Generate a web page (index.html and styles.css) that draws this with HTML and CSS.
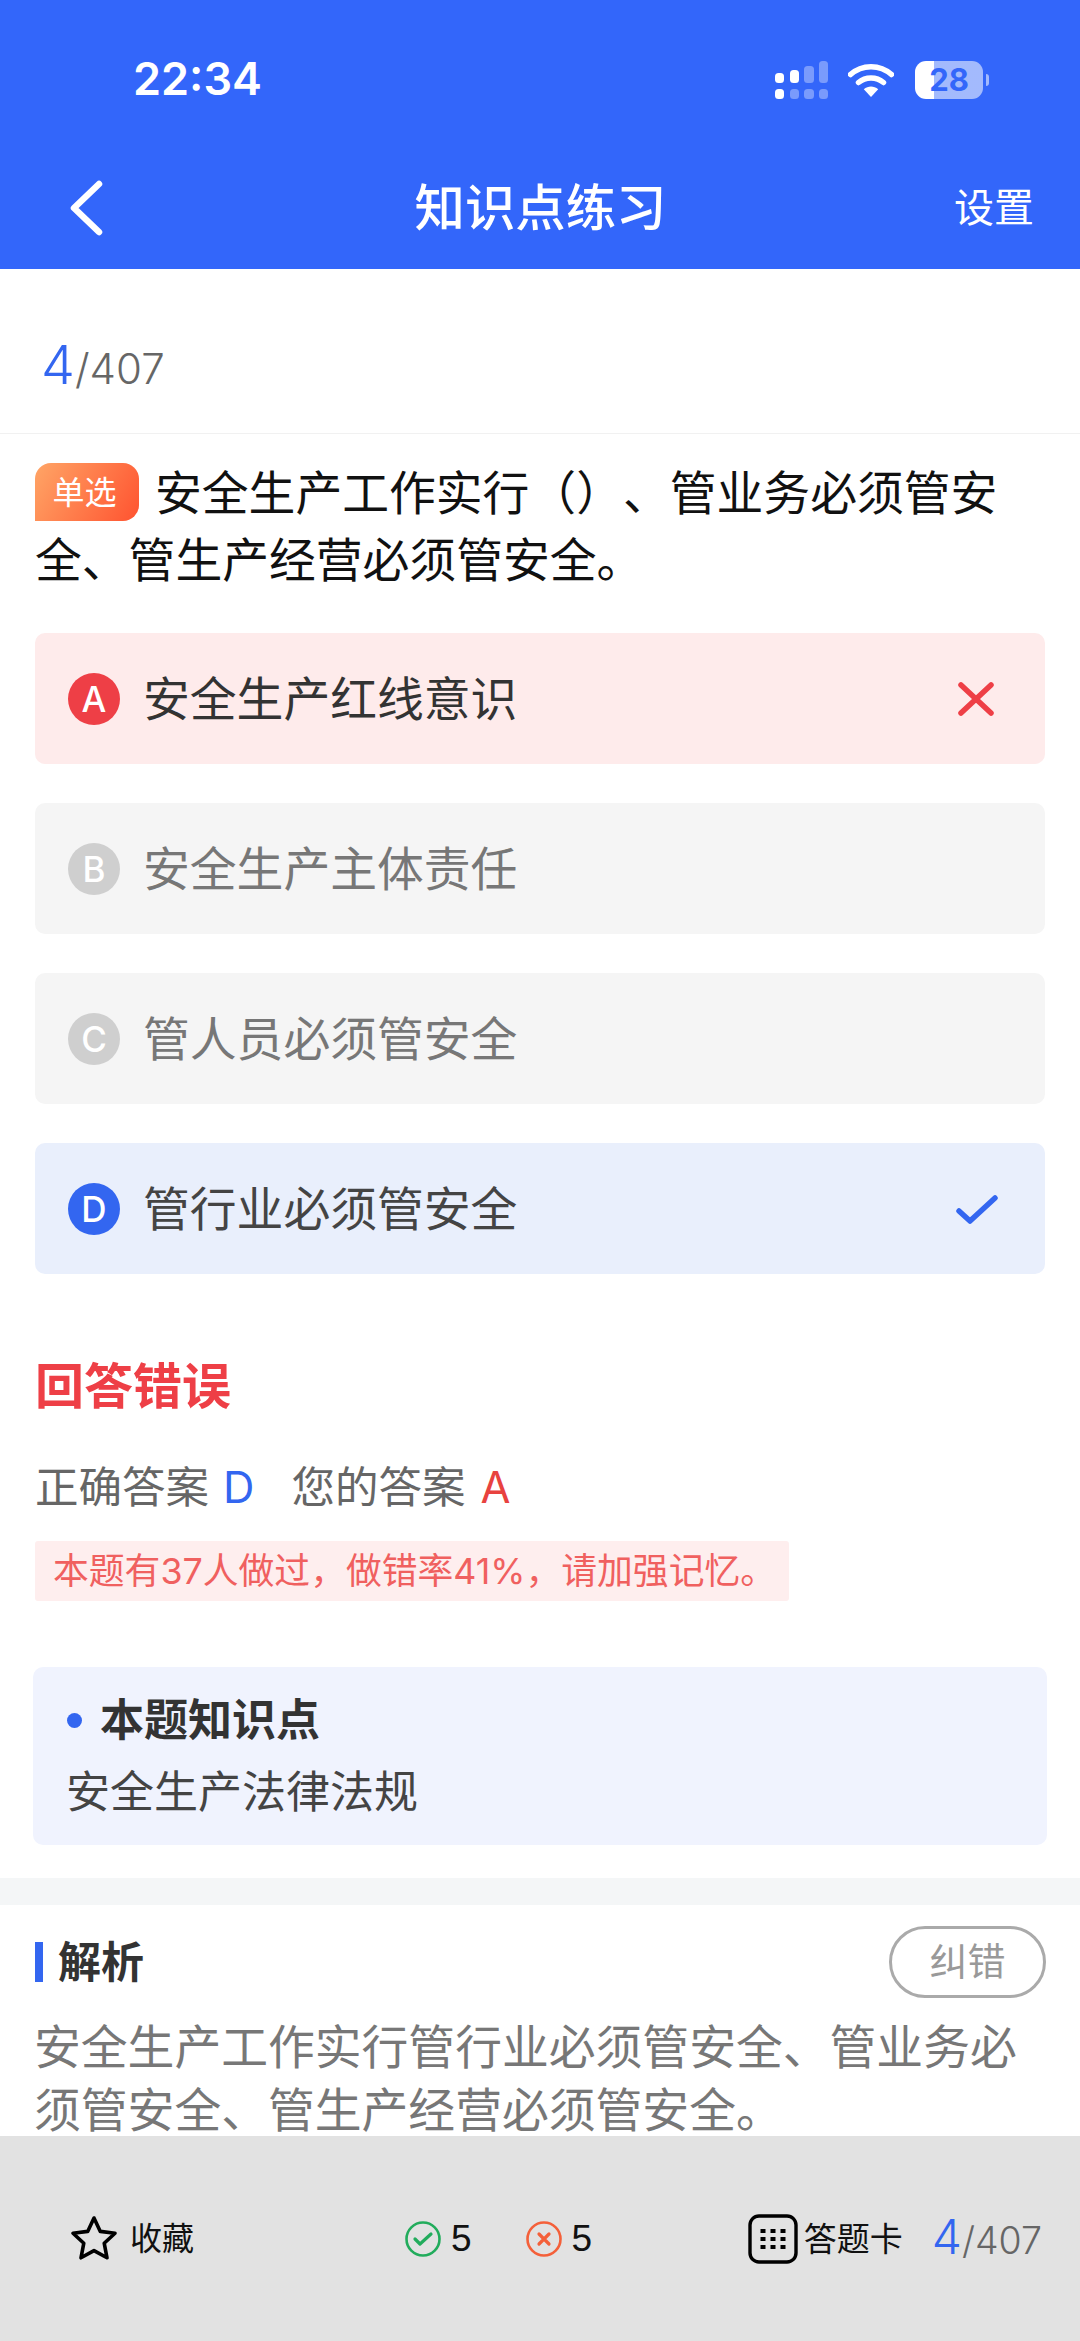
FILE: index.html
```html
<!DOCTYPE html>
<html lang="zh-CN">
<head>
<meta charset="utf-8">
<title>知识点练习</title>
<link rel="stylesheet" href="styles.css">
</head>
<body>
<div class="page">
  <header class="header">
    <div class="status">
      <span class="time">22:34</span>
      <div class="status-icons">
        <svg class="signal" width="53" height="38" viewBox="0 0 53 38">
          <rect x="0" y="12" width="9" height="10" rx="3.5" fill="#fff"/>
          <rect x="15" y="9" width="9" height="13" rx="3.5" fill="#fff"/>
          <rect x="29" y="5" width="10" height="17" rx="3.5" fill="#fff" opacity=".35"/>
          <rect x="44" y="0" width="9" height="22" rx="3.5" fill="#fff" opacity=".35"/>
          <rect x="0" y="28" width="9" height="10" rx="3.5" fill="#fff"/>
          <rect x="15" y="28" width="9" height="10" rx="3.5" fill="#fff" opacity=".35"/>
          <rect x="29" y="28" width="10" height="10" rx="3.5" fill="#fff" opacity=".35"/>
          <rect x="44" y="28" width="9" height="10" rx="3.5" fill="#fff" opacity=".35"/>
        </svg>
        <svg class="wifi" width="46" height="34" viewBox="0 0 46 34">
          <path d="M2.5 11.5C14 1 32 1 43.5 11.5" fill="none" stroke="#fff" stroke-width="5.5" stroke-linecap="round"/>
          <path d="M10.5 19.5C17.5 13.5 28.5 13.5 35.5 19.5" fill="none" stroke="#fff" stroke-width="5.5" stroke-linecap="round"/>
          <path d="M15.8 26.2C20 22.6 26 22.6 30.2 26.2L23 34Z" fill="#fff"/>
        </svg>
        <div class="battery"><span>28</span></div>
        <span class="battery-tip"></span>
      </div>
    </div>
    <nav class="nav">
      <svg class="back" width="36" height="56" viewBox="0 0 36 56">
        <path d="M31 4L6 28L31 52" fill="none" stroke="#fff" stroke-width="6.5" stroke-linecap="round" stroke-linejoin="round"/>
      </svg>
      <h1 class="nav-title">知识点练习</h1>
      <span class="nav-action">设置</span>
    </nav>
  </header>

  <main class="content">
    <div class="progress"><b class="progress-now">4</b><span class="progress-total">/407</span></div>

    <p class="question"><span class="badge">单选</span>安全生产工作实行（）、管业务必须管安全、管生产经营必须管安全。</p>

    <ul class="options">
      <li class="option option-wrong">
        <span class="letter">A</span><span class="option-text">安全生产红线意识</span>
        <svg class="mark" width="36" height="36" viewBox="0 0 36 36"><path d="M3 4L33 32M33 4L3 32" fill="none" stroke="#ee3f46" stroke-width="5.5" stroke-linecap="round"/></svg>
      </li>
      <li class="option option-idle">
        <span class="letter">B</span><span class="option-text">安全生产主体责任</span>
      </li>
      <li class="option option-idle">
        <span class="letter">C</span><span class="option-text">管人员必须管安全</span>
      </li>
      <li class="option option-right">
        <span class="letter">D</span><span class="option-text">管行业必须管安全</span>
        <svg class="mark mark-check" width="42" height="36" viewBox="0 0 42 36"><path d="M3 20L14 30L39 7" fill="none" stroke="#3366f0" stroke-width="5.5" stroke-linecap="round" stroke-linejoin="round"/></svg>
      </li>
    </ul>

    <h2 class="verdict">回答错误</h2>
    <div class="answers">
      <span>正确答案</span><span class="answer-right">D</span>
      <span class="answer-mine">您的答案</span><span class="answer-wrong">A</span>
    </div>
    <p class="stat">本题有37人做过，做错率41%，请加强记忆。</p>

    <section class="knowledge">
      <div class="knowledge-title"><i class="dot"></i>本题知识点</div>
      <div class="knowledge-text">安全生产法律法规</div>
    </section>

    <div class="band"></div>

    <section class="analysis">
      <div class="analysis-head">
        <h3 class="analysis-title">解析</h3>
        <span class="report">纠错</span>
      </div>
      <p class="analysis-text">安全生产工作实行管行业必须管安全、管业务必须管安全、管生产经营必须管安全。</p>
    </section>
  </main>

  <footer class="bottom">
    <div class="bottom-group">
      <svg width="48" height="48" viewBox="0 0 48 48"><path d="M24 3L30.3 16.4L45 18.2L34.2 28.2L37 42.8L24 35.6L11 42.8L13.8 28.2L3 18.2L17.7 16.4Z" fill="none" stroke="#000" stroke-width="3.6" stroke-linejoin="round"/></svg>
      <span class="bottom-label">收藏</span>
    </div>
    <div class="bottom-group stats">
      <svg width="36" height="36" viewBox="0 0 36 36"><circle cx="18" cy="18" r="16.5" fill="none" stroke="#22ac5c" stroke-width="2.6"/><path d="M10 18L15 23L26 13" fill="none" stroke="#22ac5c" stroke-width="3.2" stroke-linecap="round" stroke-linejoin="round"/></svg>
      <span class="num">5</span>
      <svg class="stat-wrong" width="36" height="36" viewBox="0 0 36 36"><circle cx="18" cy="18" r="16.5" fill="none" stroke="#f4603a" stroke-width="2.6"/><path d="M13 13L23 23M23 13L13 23" fill="none" stroke="#f4603a" stroke-width="3.2" stroke-linecap="round"/></svg>
      <span class="num">5</span>
    </div>
    <div class="bottom-group sheet">
      <svg width="50" height="50" viewBox="0 0 50 50">
        <rect x="2" y="2" width="46" height="46" rx="9" fill="none" stroke="#000" stroke-width="3.4"/>
        <g fill="#000">
          <rect x="12.5" y="15" width="5" height="4"/><rect x="22.5" y="15" width="5" height="4"/><rect x="32.5" y="15" width="5" height="4"/>
          <rect x="12.5" y="23" width="5" height="4"/><rect x="22.5" y="23" width="5" height="4"/><rect x="32.5" y="23" width="5" height="4"/>
          <rect x="12.5" y="31" width="5" height="4"/><rect x="22.5" y="31" width="5" height="4"/><rect x="32.5" y="31" width="5" height="4"/>
        </g>
      </svg>
      <span class="bottom-label">答题卡</span>
      <span class="bottom-progress"><b class="bottom-now">4</b><span class="bottom-total">/407</span></span>
    </div>
  </footer>
</div>
</body>
</html>
```

FILE: styles.css
```css
* { box-sizing: border-box; margin: 0; padding: 0; }
html, body { width: 1080px; height: 2341px; overflow: hidden; }
body {
  font-family: "Inter", "Noto Sans CJK SC", sans-serif;
  background: #fff;
  color: #333;
  text-spacing-trim: space-all;
}
.page { display: flex; flex-direction: column; height: 2341px; }

/* header */
.header { flex: none; height: 269px; background: #3366fa; color: #fff; }
.status { height: 150px; padding: 53px 0 0 133px; display: flex; align-items: flex-start; }
.time { font-size: 45px; line-height: 52px; font-weight: 600; }
.status-icons { margin-left: auto; margin-right: 91px; margin-top: 8px; display: flex; align-items: center; }
.wifi { margin-left: 20px; }
.battery {
  margin-left: 21px;
  width: 68px; height: 38px; border-radius: 11px;
  background: linear-gradient(90deg, #fff 0, #fff 19px, rgba(255,255,255,.55) 19px);
  display: flex; align-items: center; justify-content: center;
  color: #3366fa; font-size: 31px; font-weight: 700; line-height: 38px;
}
.battery-tip { width: 3px; height: 12px; margin-left: 3px; border-radius: 0 3px 3px 0; background: rgba(255,255,255,.55); }
.nav { height: 119px; padding: 0 46px 0 68px; display: grid; grid-template-columns: 1fr auto 1fr; align-items: center; margin-top: -2px; }
.back { flex: none; }
.nav-title { font-size: 50.4px; font-weight: 500; line-height: 70px; margin-right: 21px; }
.nav-action { font-size: 40px; line-height: 56px; justify-self: end; }

/* content */
.content { flex: 1; min-height: 0; overflow: hidden; }
.progress { height: 165px; padding: 66px 0 0 41px; border-bottom: 1px solid #f1f1f1; display: flex; align-items: baseline; }
.progress-now { font-size: 54px; font-weight: 300; color: #3366f0; line-height: 60px; }
.progress-total { font-size: 42px; font-weight: 300; color: #666; line-height: 60px; }

.question { margin-top: 26px; padding: 0 35px; font-size: 46.8px; line-height: 67px; color: #111; width: 1050px; }
.badge {
  display: inline-block; vertical-align: top; margin: 3px 16px 0 0; padding-right: 5px;
  width: 104px; height: 58px; line-height: 60px; text-align: center;
  border-radius: 16px 16px 16px 0;
  background: linear-gradient(120deg, #ffa566, #ff5330);
  color: #fff; font-size: 32px;
}

.options { list-style: none; margin: 39px 35px 0; display: flex; flex-direction: column; gap: 39px; }
.option { height: 131px; border-radius: 10px; display: flex; align-items: center; padding: 0 51px 0 33px; }
.option-wrong { background: #feebeb; color: #333; }
.option-idle { background: #f5f5f5; color: #777; }
.option-right { background: #e9effc; color: #444; }
.letter {
  flex: none; width: 52px; height: 52px; border-radius: 50%;
  color: #fff; font-size: 35px; font-weight: 500; line-height: 52px; text-align: center;
}
.option-wrong .letter { background: #ee3f46; }
.option-idle .letter { background: #cfcfcf; }
.option-right .letter { background: #3366f0; }
.option-text { margin-left: 23px; font-size: 46.8px; line-height: 66px; }
.mark { margin-left: auto; }
.mark-check { margin-right: -4px; }

.verdict { margin: 78px 35px 0; font-size: 49px; font-weight: 700; line-height: 70px; color: #ee3f46; }
.answers { margin: 35px 35px 0; font-size: 43.5px; line-height: 60px; color: #666; display: flex; }
.answer-right { color: #3366f0; margin-left: 14px; }
.answer-mine { margin-left: 37px; }
.answer-wrong { color: #e8423f; margin-left: 15px; }
.stat {
  margin: 24px 0 0 35px; width: 754px; height: 60px; line-height: 60px; padding-left: 18px;
  background: #feeeee; color: #f0605f; font-size: 35.8px; border-radius: 3px; white-space: nowrap;
}

.knowledge { margin: 66px 33px 0; height: 178px; padding: 24px 33px 0; border-radius: 10px; background: #f0f3fe; }
.knowledge-title { display: flex; align-items: center; font-size: 44px; font-weight: 700; line-height: 58px; color: #333; }
.dot { width: 15px; height: 15px; border-radius: 50%; background: #3366f0; margin: 0 18px 0 1px; }
.knowledge-text { margin-top: 14px; font-size: 44px; line-height: 58px; color: #444; }

.band { margin-top: 33px; height: 27px; background: #f4f6f7; }

.analysis { padding: 21px 34px 0 35px; }
.analysis-head { display: flex; align-items: center; justify-content: space-between; height: 72px; }
.analysis-title { border-left: 8px solid #3366f0; padding-left: 15px; height: 40px; display: flex; align-items: center; font-size: 43px; font-weight: 700; line-height: 40px; color: #333; }
.report { width: 157px; height: 72px; border: 3px solid #aaa; border-radius: 36px; text-align: center; line-height: 64px; font-size: 38px; color: #999; }
.analysis-text { margin-top: 18px; margin-left: -1px; font-size: 46.8px; line-height: 63px; color: #777; }

/* bottom bar */
.bottom { flex: none; height: 205px; background: #e2e2e2; padding: 0 38px 0 70px; display: flex; align-items: center; color: #111; }
.bottom-group { display: flex; align-items: center; }
.bottom-label { margin-left: 12px; font-size: 32px; line-height: 44px; }
.stats { margin-left: 211px; }
.num { margin-left: 10px; font-size: 37px; line-height: 44px; font-family: "Liberation Sans", sans-serif; }
.stat-wrong { margin-left: 54px; }
.sheet { margin-left: auto; }
.sheet .bottom-label { margin-left: 6px; font-size: 33px; }
.bottom-progress { margin-left: 29px; display: flex; align-items: baseline; }
.bottom-now { font-size: 48px; font-weight: 300; color: #3366f0; line-height: 56px; }
.bottom-total { font-size: 37.5px; font-weight: 300; color: #666; line-height: 56px; }
```
